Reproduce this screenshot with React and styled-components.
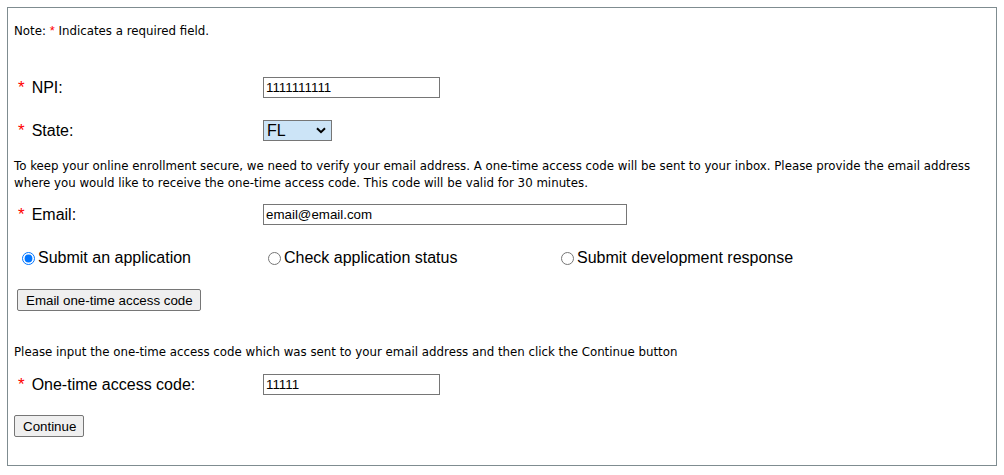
import styled, { createGlobalStyle } from "styled-components";

const GlobalStyle = createGlobalStyle`
  body {
    margin: 0;
    background: #ffffff;
    color: #000000;
    font-family: "DejaVu Sans", Verdana, sans-serif;
  }
`;

const Page = styled.div`
  padding: 7px;
`;

const Box = styled.form`
  border: 1px solid #7f8c90;
  padding: 0 6px 28px 6px;
`;

const SmallText = styled.p`
  margin: ${(p) => p.$top || 0}px 0 0 0;
  font-family: "DejaVu Sans", Verdana, sans-serif;
  font-size: 11.8px;
  line-height: ${(p) => p.$lh || 14}px;
  color: #000000;
`;

const Req = styled.span`
  color: #ff0000;
  font-family: "Liberation Sans", Arial, sans-serif;
  font-size: ${(p) => (p.$big ? 17 : 13)}px;
  margin-right: ${(p) => (p.$big ? 7 : 0)}px;
`;

const FieldRow = styled.div`
  display: grid;
  grid-template-columns: 245px 1fr;
  align-items: center;
  height: 21px;
  margin-top: ${(p) => p.$top || 0}px;
  padding-left: 4px;
`;

const Label = styled.label`
  font-family: "Liberation Sans", Arial, sans-serif;
  font-size: 16px;
  line-height: 21px;
`;

const TextInput = styled.input`
  box-sizing: border-box;
  width: ${(p) => p.$w}px;
  height: 21px;
  margin: 0;
  padding: 1px 2px;
  border: 1px solid #767676;
  border-radius: 0;
  font-family: "Liberation Sans", Arial, sans-serif;
  font-size: 13.33px;
  color: #000000;
  background: #ffffff;
  outline: none;
`;

const SelectWrap = styled.div`
  position: relative;
  width: 69px;
  height: 21px;
`;

const Select = styled.select`
  appearance: none;
  box-sizing: border-box;
  width: 69px;
  height: 21px;
  margin: 0;
  padding: 0 0 0 3px;
  border: 1px solid #767676;
  border-radius: 0;
  background: #cce4f7;
  font-family: "Liberation Sans", Arial, sans-serif;
  font-size: 16px;
  color: #000000;
  outline: none;
`;

const Chevron = styled.svg`
  position: absolute;
  right: 6px;
  top: 7px;
  pointer-events: none;
`;

const RadioRow = styled.div`
  display: grid;
  grid-template-columns: 246px 293px auto;
  align-items: center;
  height: 20px;
  margin-top: 23px;
  padding-left: 3px;
`;

const RadioLabel = styled.label`
  display: flex;
  align-items: center;
  font-family: "Liberation Sans", Arial, sans-serif;
  font-size: 16px;

  input {
    width: 13px;
    height: 13px;
    margin: 0 3px 0 5px;
    accent-color: #0075ff;
  }
`;

const Button = styled.button`
  display: block;
  box-sizing: border-box;
  height: 22px;
  margin: ${(p) => p.$top}px 0 0 ${(p) => p.$left || 0}px;
  padding: 1px 7px 1px 8px;
  border: 1px solid #767676;
  border-radius: 2px;
  background: #efefef;
  font-family: "Liberation Sans", Arial, sans-serif;
  font-size: 13.33px;
  color: #000000;
  cursor: pointer;
`;

export default function App() {
  return (
    <Page>
      <GlobalStyle />
      <Box onSubmit={(e) => e.preventDefault()}>
        <SmallText $top={16}>
          Note: <Req>*</Req> Indicates a required field.
        </SmallText>

        <FieldRow $top={39}>
          <Label>
            <Req $big>*</Req>NPI:
          </Label>
          <TextInput $w={177} defaultValue="1111111111" />
        </FieldRow>

        <FieldRow $top={22}>
          <Label>
            <Req $big>*</Req>State:
          </Label>
          <SelectWrap>
            <Select defaultValue="FL">
              <option value="AL">AL</option>
              <option value="FL">FL</option>
              <option value="GA">GA</option>
            </Select>
            <Chevron width="10" height="7" viewBox="0 0 10 7">
              <path d="M1 1.2 L5 5.2 L9 1.2" fill="none" stroke="#000" strokeWidth="2" />
            </Chevron>
          </SelectWrap>
        </FieldRow>

        <SmallText $top={17} $lh={17}>
          To keep your online enrollment secure, we need to verify your email address. A one-time
          access code will be sent to your inbox. Please provide the email address where you would
          like to receive the one-time access code. This code will be valid for 30 minutes.
        </SmallText>

        <FieldRow $top={12}>
          <Label>
            <Req $big>*</Req>Email:
          </Label>
          <TextInput $w={364} defaultValue="email@email.com" />
        </FieldRow>

        <RadioRow>
          <RadioLabel>
            <input type="radio" name="action" defaultChecked />
            Submit an application
          </RadioLabel>
          <RadioLabel>
            <input type="radio" name="action" />
            Check application status
          </RadioLabel>
          <RadioLabel>
            <input type="radio" name="action" />
            Submit development response
          </RadioLabel>
        </RadioRow>

        <Button type="button" $top={21} $left={3}>
          Email one-time access code
        </Button>

        <SmallText $top={34}>
          Please input the one-time access code which was sent to your email address and then click
          the Continue button
        </SmallText>

        <FieldRow $top={15}>
          <Label>
            <Req $big>*</Req>One-time access code:
          </Label>
          <TextInput $w={177} defaultValue="11111" />
        </FieldRow>

        <Button type="submit" $top={20}>
          Continue
        </Button>
      </Box>
    </Page>
  );
}
